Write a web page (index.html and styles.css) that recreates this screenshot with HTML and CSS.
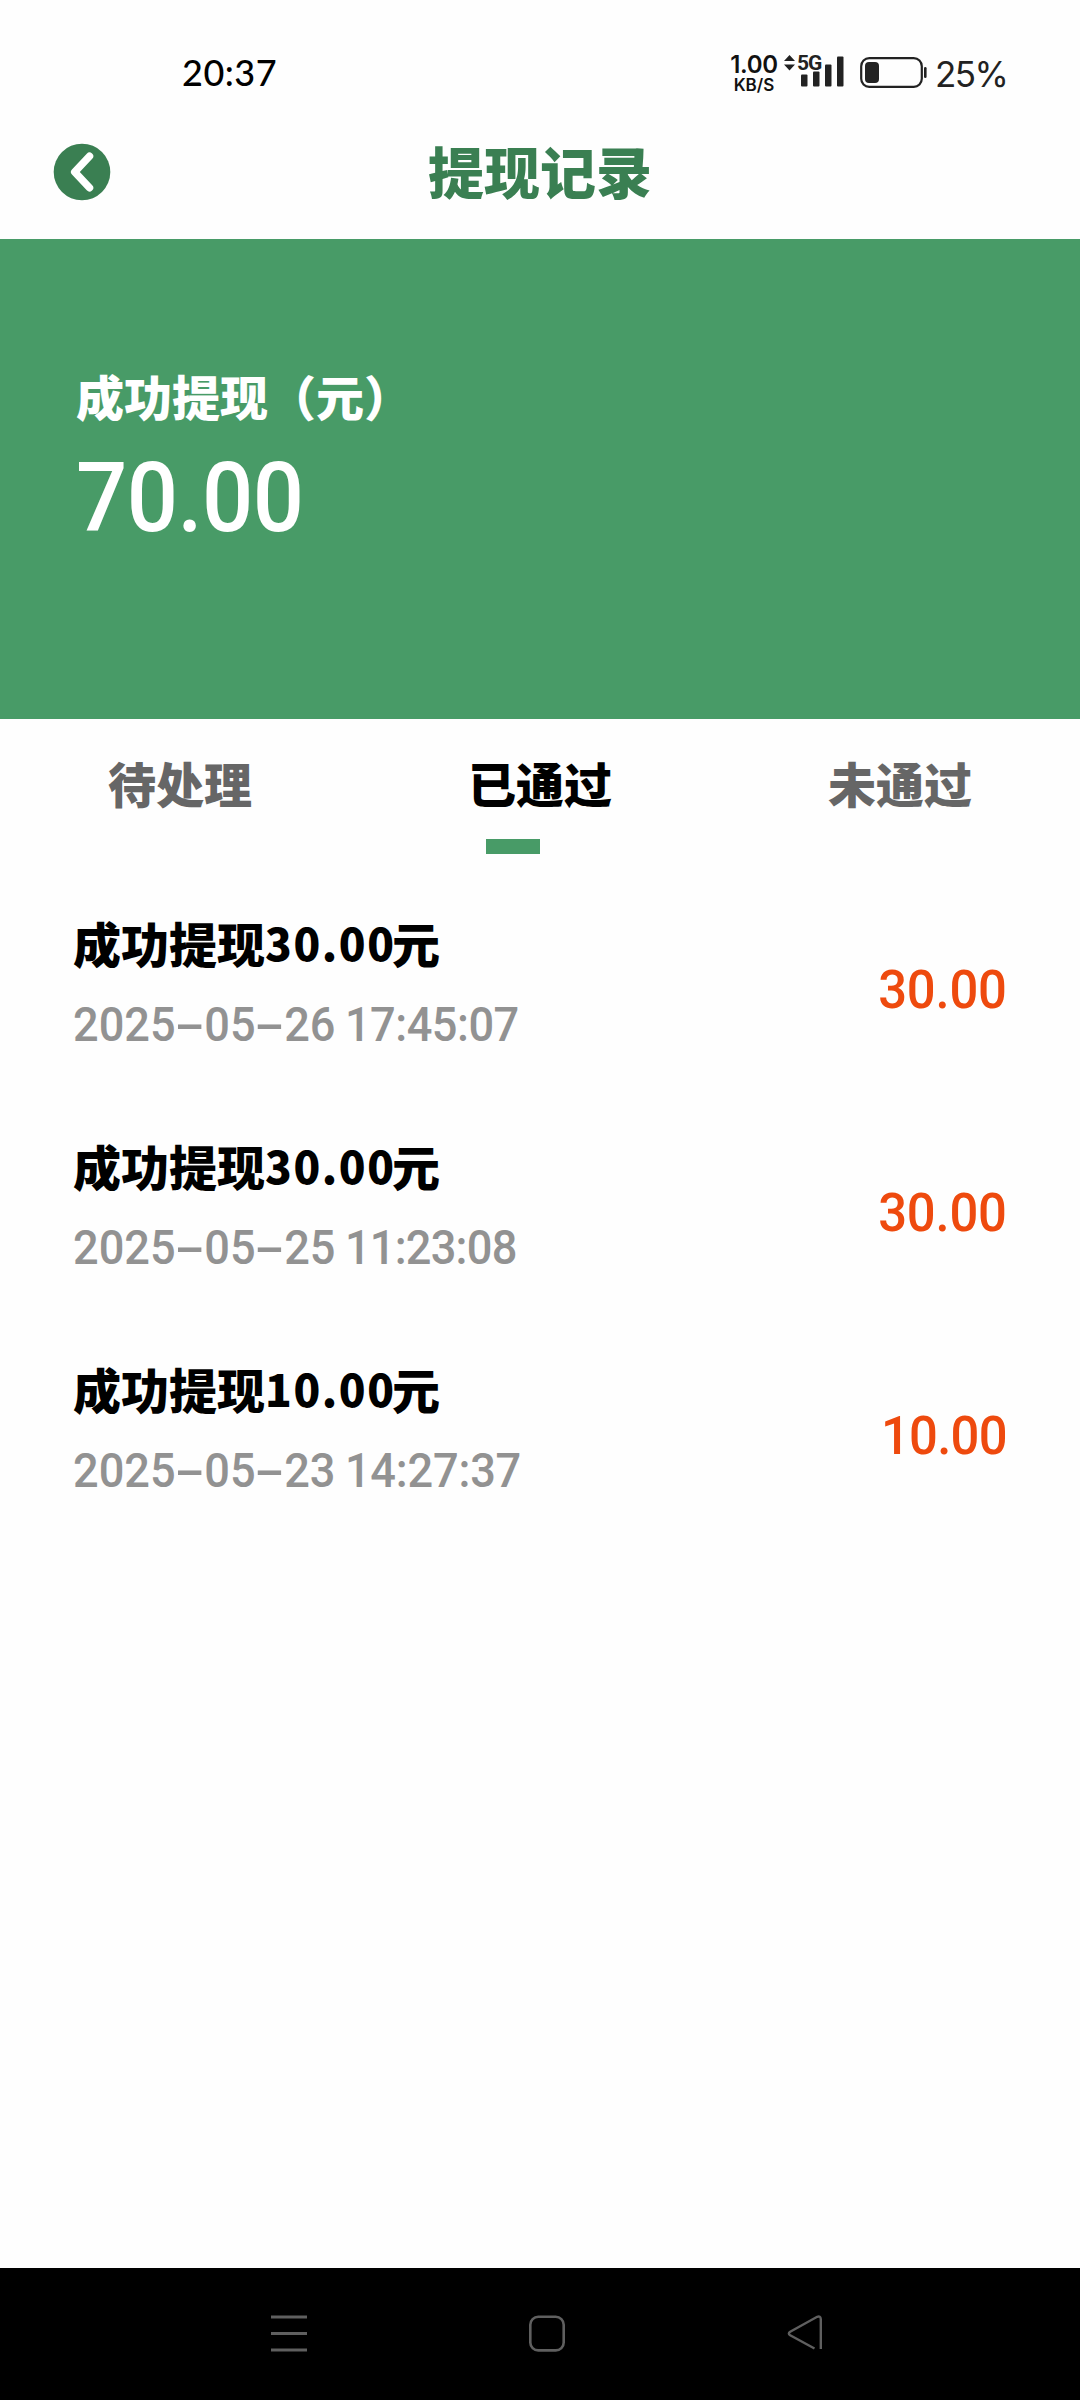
FILE: index.html
```html
<!DOCTYPE html>
<html lang="zh-CN">
<head>
<meta charset="utf-8">
<title>提现记录</title>
<link rel="stylesheet" href="styles.css">
</head>
<body>
<div class="screen">
  <div class="status">
    <span class="clock">20:37</span>
    <div class="status-right">
      <div class="speed"><span class="rate">1.00</span><span class="unit">KB/S</span></div>
      <div class="signal">
        <svg width="60" height="36" viewBox="0 0 60 36" fill="#222">
          <path d="M0 8L5.500 2L11 8ZM0 11.500L5.500 17.500L11 11.500Z"/>
          <rect x="17" y="21.500" width="6.500" height="12" rx="1"/>
          <rect x="29" y="18.500" width="6.500" height="15" rx="1"/>
          <rect x="41" y="11.500" width="6.500" height="22" rx="1"/>
          <rect x="53" y="3.500" width="6.500" height="30" rx="1"/>
        </svg>
        <span class="network">5G</span>
      </div>
      <svg class="battery" width="68" height="32" viewBox="0 0 68 32">
        <rect x="1.200" y="1.200" width="60.600" height="28.600" rx="8" fill="none" stroke="#222" stroke-width="2.200"/>
        <rect x="5" y="5" width="14" height="21" rx="4" fill="#222"/>
        <rect x="64" y="10" width="2.600" height="11" rx="1.300" fill="#222"/>
      </svg>
      <span class="percent">25%</span>
    </div>
  </div>

  <header class="header">
    <svg class="back" width="58" height="58" viewBox="0 0 58 58">
      <circle cx="29" cy="29" r="28.300" fill="#3a7f52"/>
      <path d="M36.500 13.200L21.700 29L36.500 44.800" fill="none" stroke="#fff" stroke-width="7.500" stroke-linecap="round" stroke-linejoin="round"/>
    </svg>
    <h1 class="title">提现记录</h1>
  </header>

  <section class="hero">
    <div class="hero-label">成功提现（元）</div>
    <div class="hero-amount">70.00</div>
  </section>

  <nav class="tabs">
    <div class="tab">待处理</div>
    <div class="tab active">已通过</div>
    <div class="tab">未通过</div>
  </nav>

  <main class="list">
    <div class="record">
      <div class="info">
        <div class="name">成功提现<span class="sum">30.00</span>元</div>
        <div class="date"><span>2025</span><i>-</i><span>05</span><i>-</i><span>26</span><span class="time">17:45:07</span></div>
      </div>
      <div class="amount">30.00</div>
    </div>
    <div class="record">
      <div class="info">
        <div class="name">成功提现<span class="sum">30.00</span>元</div>
        <div class="date"><span>2025</span><i>-</i><span>05</span><i>-</i><span>25</span><span class="time tight">11:23:08</span></div>
      </div>
      <div class="amount">30.00</div>
    </div>
    <div class="record">
      <div class="info">
        <div class="name">成功提现<span class="sum">10.00</span>元</div>
        <div class="date"><span>2025</span><i>-</i><span>05</span><i>-</i><span>23</span><span class="time loose">14:27:37</span></div>
      </div>
      <div class="amount narrow">10.00</div>
    </div>
  </main>

  <footer class="navbar">
    <svg width="36" height="37" viewBox="0 0 36 37" fill="none" stroke="#5f5f5f" stroke-width="3"><path d="M0 2H36M0 18.500H36M0 35H36"/></svg>
    <svg width="36" height="37" viewBox="0 0 36 37" fill="none" stroke="#5f5f5f" stroke-width="2.600"><rect x="1.300" y="1.800" width="33.400" height="33.600" rx="8"/></svg>
    <svg width="36" height="37" viewBox="0 0 36 37" fill="none" stroke="#5f5f5f" stroke-width="2.400"><path d="M27.500 33.500L3.200 20.300Q0.500 18.500 3.200 16.700L30.200 1.800Q33.500 0.500 33.800 4V34"/></svg>
  </footer>
</div>
</body>
</html>
```
FILE: styles.css
```css
* { box-sizing: border-box; }
body { margin: 0; background: #fff; }
svg { display: block; flex: none; }
.screen {
  width: 1080px;
  height: 2400px;
  display: flex;
  flex-direction: column;
  background: #fefefe;
  font-family: "Noto Sans CJK SC", sans-serif;
  font-weight: 900;
  white-space: nowrap;
  overflow: hidden;
}

.status {
  height: 105px;
  flex: none;
  display: flex;
  justify-content: space-between;
  padding: 53px 74px 0 182px;
}
.clock {
  font: 500 36px/38px Lato, sans-serif;
  letter-spacing: 0.5px;
}
.status-right { display: flex; color: #222; }
.speed {
  width: 50px;
  display: flex;
  flex-direction: column;
  align-items: center;
  color: #111;
  font-family: Inter, sans-serif;
}
.rate { font-size: 24px; line-height: 23px; font-weight: 600; letter-spacing: -0.3px; }
.unit { font-size: 17px; line-height: 18px; font-weight: 600; }
.signal { position: relative; margin-left: 5px; }
.network {
  position: absolute;
  left: 13px;
  top: 0;
  font: 700 21px/21px Roboto, sans-serif;
  letter-spacing: -1px;
}
.battery { margin: 4px 0 0 16px; }
.percent {
  width: 71px;
  margin-left: 7px;
  font: 400 35px/42px Inter, sans-serif;
  letter-spacing: -1.5px;
}

.header {
  height: 134px;
  flex: none;
  display: grid;
  grid-template-columns: 58px 1fr 58px;
  align-items: center;
  padding: 0 53px;
}
.title {
  margin: -5px 0 0;
  text-align: center;
  font-size: 56px;
  line-height: 80px;
  font-weight: 900;
  color: #3a7f52;
}

.hero {
  height: 480px;
  flex: none;
  padding: 124px 76px 0;
  background: #489b67;
  color: #fff;
}
.hero-label { font-size: 48px; line-height: 64px; }
.hero-amount {
  font: 500 96px/112px Roboto, sans-serif;
  letter-spacing: -0.6px;
  margin-top: 15px;
  transform: scaleX(0.94);
  transform-origin: left;
}

.tabs {
  height: 158px;
  flex: none;
  display: flex;
  justify-content: space-between;
  padding: 31px 108px 0;
  color: #666;
  font-size: 48px;
  line-height: 64px;
}
.tab { width: 144px; display: flex; flex-direction: column; }
.active { color: #000; }
.active::after {
  content: "";
  width: 54px;
  height: 15px;
  margin: 25px 0 0 18px;
  background: #489b67;
}

.list { flex: 1; }
.record {
  height: 223px;
  display: flex;
  justify-content: space-between;
  align-items: center;
  padding: 0 73px;
}
.info { margin-top: -11px; }
.name {
  display: flex;
  font-size: 48px;
  line-height: 64px;
  color: #000;
}
.sum {
  width: 127px;
  font-size: 44px;
  letter-spacing: 1.6px;
}
.date {
  display: flex;
  margin-top: 19px;
  font: 500 48px/64px Roboto, sans-serif;
  color: #929292;
  transform: scaleX(0.94);
  transform-origin: left;
}
.date i {
  width: 30.5px;
  font-style: normal;
  text-align: center;
  transform: scaleX(2);
}
.time { margin-left: 10px; letter-spacing: -0.5px; }
.tight { letter-spacing: -0.8px; }
.loose { letter-spacing: -0.2px; }
.amount {
  font: 500 54px/64px Roboto, sans-serif;
  letter-spacing: -0.2px;
  margin-top: 2px;
  color: #ee4a0e;
  transform: scaleX(0.94);
  transform-origin: right;
}
.narrow { letter-spacing: -0.8px; }

.navbar {
  height: 132px;
  flex: none;
  display: flex;
  justify-content: space-between;
  padding: 47px 257px 0 271px;
  background: #000;
}
```
